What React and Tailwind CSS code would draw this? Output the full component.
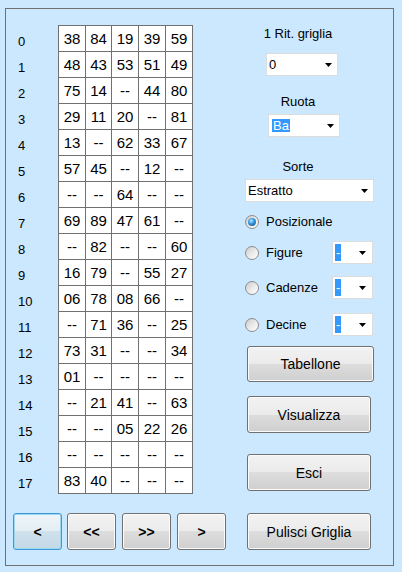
const rows = [
  ['38', '84', '19', '39', '59'],
  ['48', '43', '53', '51', '49'],
  ['75', '14', '--', '44', '80'],
  ['29', '11', '20', '--', '81'],
  ['13', '--', '62', '33', '67'],
  ['57', '45', '--', '12', '--'],
  ['--', '--', '64', '--', '--'],
  ['69', '89', '47', '61', '--'],
  ['--', '82', '--', '--', '60'],
  ['16', '79', '--', '55', '27'],
  ['06', '78', '08', '66', '--'],
  ['--', '71', '36', '--', '25'],
  ['73', '31', '--', '--', '34'],
  ['01', '--', '--', '--', '--'],
  ['--', '21', '41', '--', '63'],
  ['--', '--', '05', '22', '26'],
  ['--', '--', '--', '--', '--'],
  ['83', '40', '--', '--', '--'],
];

const font = "font-['Liberation_Sans',Arial,sans-serif]";

function Arrow() {
  return (
    <svg width="7" height="4" viewBox="0 0 7 4" className="ml-auto shrink-0">
      <polygon points="0,0 7,0 3.5,4" fill="#000" />
    </svg>
  );
}

function Combo({ className, children }) {
  return (
    <div
      className={
        'flex items-center h-[23px] bg-white border border-[#dcdcdc] pl-[2px] text-[13px] leading-[15px] text-black ' +
        className
      }
    >
      {children}
      <Arrow />
    </div>
  );
}

function Radio({ checked }) {
  return (
    <span className="flex items-center justify-center w-[14px] h-[14px] rounded-full border border-[#8c8c8c] bg-[linear-gradient(135deg,#cbcbcb,#ececec_55%,#ffffff)] shrink-0">
      {checked && (
        <span className="w-[8px] h-[8px] rounded-full bg-[radial-gradient(circle_at_40%_35%,#b6ecff_0%,#3a9be0_40%,#0c3f7a_100%)]" />
      )}
    </span>
  );
}

function SmallCombo() {
  return (
    <Combo className="w-[41px] pr-[6px]">
      <span className="h-[17px] leading-[17px] px-px bg-[#3399ff] text-white">-</span>
    </Combo>
  );
}

function Btn({ className, children }) {
  return (
    <button
      className={
        'flex items-center justify-center rounded-[3px] border border-[#707070] bg-[linear-gradient(#f2f2f2_0%,#ebebeb_50%,#dddddd_50%,#cfcfcf_100%)] shadow-[inset_0_0_0_1px_#fbfbfb] text-[14px] leading-none text-black ' +
        className
      }
    >
      {children}
    </button>
  );
}

export default function App() {
  return (
    <div className={'w-[402px] h-[572px] bg-[#cce8ff] pt-[8px] pl-[5px] text-black ' + font}>
      <div className="flex w-[389px] h-[558px] border border-[#707070]">
        {/* grid + paging */}
        <div className="w-[239px] pt-[16px]">
          <div className="flex items-start">
            <div className="w-[52px] pl-[12px] pt-[9px] flex flex-col">
              {rows.map((_, i) => (
                <div key={i} className="h-[26px] text-[13px] leading-[15px]">
                  {i}
                </div>
              ))}
            </div>
            <div className="grid grid-cols-[26px_25px_26px_26px_26px] auto-rows-[25px] gap-px p-px bg-[#707070]">
              {rows.flat().map((v, i) => (
                <div key={i} className="bg-white flex items-center justify-center text-[15px] leading-none">
                  {v}
                </div>
              ))}
            </div>
          </div>

          <div className="flex mt-[11px] pl-[7px] font-bold">
            <button className="flex items-center justify-center w-[49px] h-[37px] rounded-[3px] border border-[#3c9ad6] bg-[linear-gradient(#eef5f9_0%,#e3eef4_50%,#cfe2ec_50%,#c3d9e6_100%)] shadow-[inset_0_0_0_1px_#9cd6f3] text-[14px] leading-none">
              &lt;
            </button>
            <Btn className="ml-[5px] w-[49px] h-[37px] font-bold">&lt;&lt;</Btn>
            <Btn className="ml-[6px] w-[49px] h-[37px] font-bold">&gt;&gt;</Btn>
            <Btn className="ml-[6px] w-[49px] h-[37px] font-bold">&gt;</Btn>
          </div>
        </div>

        {/* controls */}
        <div className="flex-1 pt-[17px] text-[13px] leading-[15px]">
          <div className="w-[106px] text-center">1 Rit. griglia</div>
          <Combo className="mt-[12px] ml-[21px] w-[72px] pr-[5px]">0</Combo>

          <div className="mt-[18px] w-[106px] text-center">Ruota</div>
          <Combo className="mt-[5px] ml-[23px] w-[72px] pr-[5px]">
            <span className="h-[13px] leading-[13px] px-px ml-px bg-[#3399ff] text-white">Ba</span>
          </Combo>

          <div className="mt-[22px] w-[106px] text-center">Sorte</div>
          <Combo className="mt-[5px] w-[129px] pr-[5px]">Estratto</Combo>

          <div className="mt-[8px] h-[23px] flex items-center">
            <Radio checked />
            <span className="ml-[7px]">Posizionale</span>
          </div>
          <div className="mt-[8px] h-[23px] flex items-center">
            <div className="w-[87px] flex items-center">
              <Radio />
              <span className="ml-[7px]">Figure</span>
            </div>
            <SmallCombo />
          </div>
          <div className="mt-[12px] h-[23px] flex items-center">
            <div className="w-[87px] flex items-center">
              <Radio />
              <span className="ml-[7px]">Cadenze</span>
            </div>
            <SmallCombo />
          </div>
          <div className="mt-[14px] h-[23px] flex items-center">
            <div className="w-[87px] flex items-center">
              <Radio />
              <span className="ml-[7px]">Decine</span>
            </div>
            <SmallCombo />
          </div>

          <Btn className="mt-[10px] ml-[2px] w-[127px] h-[36px]">Tabellone</Btn>
          <Btn className="mt-[14px] ml-[2px] w-[124px] h-[37px]">Visualizza</Btn>
          <Btn className="mt-[21px] ml-[2px] w-[124px] h-[37px]">Esci</Btn>
          <Btn className="mt-[22px] ml-[2px] w-[124px] h-[37px]">Pulisci Griglia</Btn>
        </div>
      </div>
    </div>
  );
}
